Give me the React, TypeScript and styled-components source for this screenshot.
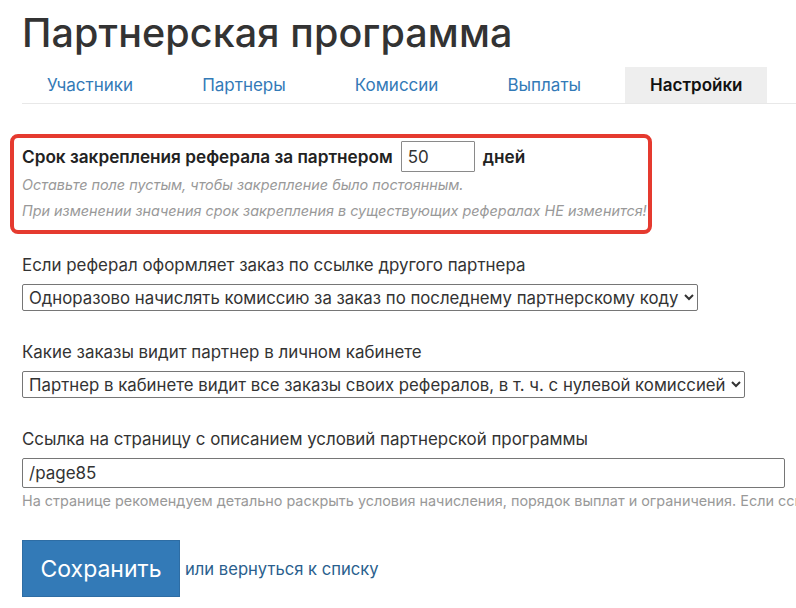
import React from "react";
import styled, { createGlobalStyle } from "styled-components";

const Global = createGlobalStyle`
  html, body { margin: 0; padding: 0; background: #fff; }
  body { font-family: Inter, "Noto Sans", sans-serif; color: #333; overflow: hidden; }
`;

const Page = styled.div`
  padding: 0 0 0 22px;
  width: 796px;
  box-sizing: border-box;
  overflow: hidden;
`;

const Title = styled.h1`
  margin: 0;
  padding-top: 9px;
  font-size: 39.5px;
  line-height: 48px;
  font-weight: 500;
  color: #333;
  letter-spacing: 0.1px;
`;

const Tabs = styled.nav`
  display: flex;
  gap: 19px;
  margin-top: 10px;
  border-bottom: 1px solid #e8e8e8;
`;

const Tab = styled.a<{ $active?: boolean }>`
  display: block;
  padding: 0 25px;
  height: 36px;
  line-height: 36px;
  font-size: 17px;
  text-decoration: none;
  color: ${(p) => (p.$active ? "#111" : "#337ab7")};
  font-weight: ${(p) => (p.$active ? 600 : 400)};
  background: ${(p) => (p.$active ? "#eeeeee" : "transparent")};
`;

const Highlight = styled.div`
  margin: 30px 0 0 -12px;
  width: 642px;
  box-sizing: border-box;
  border: 4px solid #e53a2f;
  border-radius: 8px;
  padding: 3px 4px 6px 8px;
`;

const InlineRow = styled.div`
  display: flex;
  align-items: center;
  gap: 8px;
  font-size: 17.2px;
  font-weight: 600;
  color: #222;
`;

const DaysInput = styled.input`
  width: 74px;
  height: 31px;
  box-sizing: border-box;
  border: 1px solid #8a8a8a;
  border-radius: 1px;
  font-family: inherit;
  font-size: 17px;
  color: #333;
  padding: 0 6px;
`;

const Hint = styled.div<{ $italic?: boolean }>`
  font-size: ${(p) => (p.$italic ? "14.4px" : "14.4px")};
  line-height: 26px;
  color: #999;
  font-style: ${(p) => (p.$italic ? "italic" : "normal")};
  white-space: nowrap;
`;

const Field = styled.div<{ $top: number }>`
  margin-top: ${(p) => p.$top}px;
  display: flex;
  flex-direction: column;
  align-items: flex-start;
`;

const Label = styled.label`
  font-size: 16.9px;
  line-height: 22px;
  color: #333;
  margin-bottom: 8px;
`;

const Select = styled.select`
  height: 27px;
  font-family: inherit;
  font-size: 16.8px;
  color: #333;
  border: 1px solid #767676;
  border-radius: 2px;
  background: #fff;
  padding: 0 2px;
`;

const TextInput = styled.input`
  width: 763px;
  height: 30px;
  box-sizing: border-box;
  border: 1px solid #767676;
  border-radius: 2px;
  font-family: inherit;
  font-size: 17px;
  color: #333;
  padding: 0 6px;
`;

const Actions = styled.div`
  display: flex;
  align-items: center;
  gap: 5px;
  margin-top: 26px;
`;

const SaveButton = styled.button`
  width: 158px;
  height: 57px;
  background: #337ab7;
  border: 1px solid #2e6da4;
  color: #fff;
  font-family: inherit;
  font-size: 23px;
  cursor: pointer;
`;

const BackLink = styled.a`
  font-size: 16.6px;
  color: #2b5f8e;
  text-decoration: none;
`;

export default function App() {
  return (
    <Page>
      <Global />
      <Title>Партнерская программа</Title>
      <Tabs>
        <Tab href="#">Участники</Tab>
        <Tab href="#">Партнеры</Tab>
        <Tab href="#">Комиссии</Tab>
        <Tab href="#">Выплаты</Tab>
        <Tab href="#" $active>
          Настройки
        </Tab>
      </Tabs>

      <Highlight>
        <InlineRow>
          <span>Срок закрепления реферала за партнером</span>
          <DaysInput defaultValue="50" />
          <span>дней</span>
        </InlineRow>
        <Hint $italic>Оставьте поле пустым, чтобы закрепление было постоянным.</Hint>
        <Hint $italic>
          При изменении значения срок закрепления в существующих рефералах НЕ изменится!
        </Hint>
      </Highlight>

      <Field $top={20}>
        <Label>Если реферал оформляет заказ по ссылке другого партнера</Label>
        <Select defaultValue="a">
          <option value="a">Одноразово начислять комиссию за заказ по последнему партнерскому коду</option>
        </Select>
      </Field>

      <Field $top={30}>
        <Label>Какие заказы видит партнер в личном кабинете</Label>
        <Select defaultValue="a">
          <option value="a">Партнер в кабинете видит все заказы своих рефералов, в т. ч. с нулевой комиссией</option>
        </Select>
      </Field>

      <Field $top={30}>
        <Label>Ссылка на страницу с описанием условий партнерской программы</Label>
        <TextInput defaultValue="/page85" />
        <Hint>
          На странице рекомендуем детально раскрыть условия начисления, порядок выплат и ограничения. Если ссылка не указана, условия не показываются.
        </Hint>
      </Field>

      <Actions>
        <SaveButton>Сохранить</SaveButton>
        <BackLink href="#">или вернуться к списку</BackLink>
      </Actions>
    </Page>
  );
}
